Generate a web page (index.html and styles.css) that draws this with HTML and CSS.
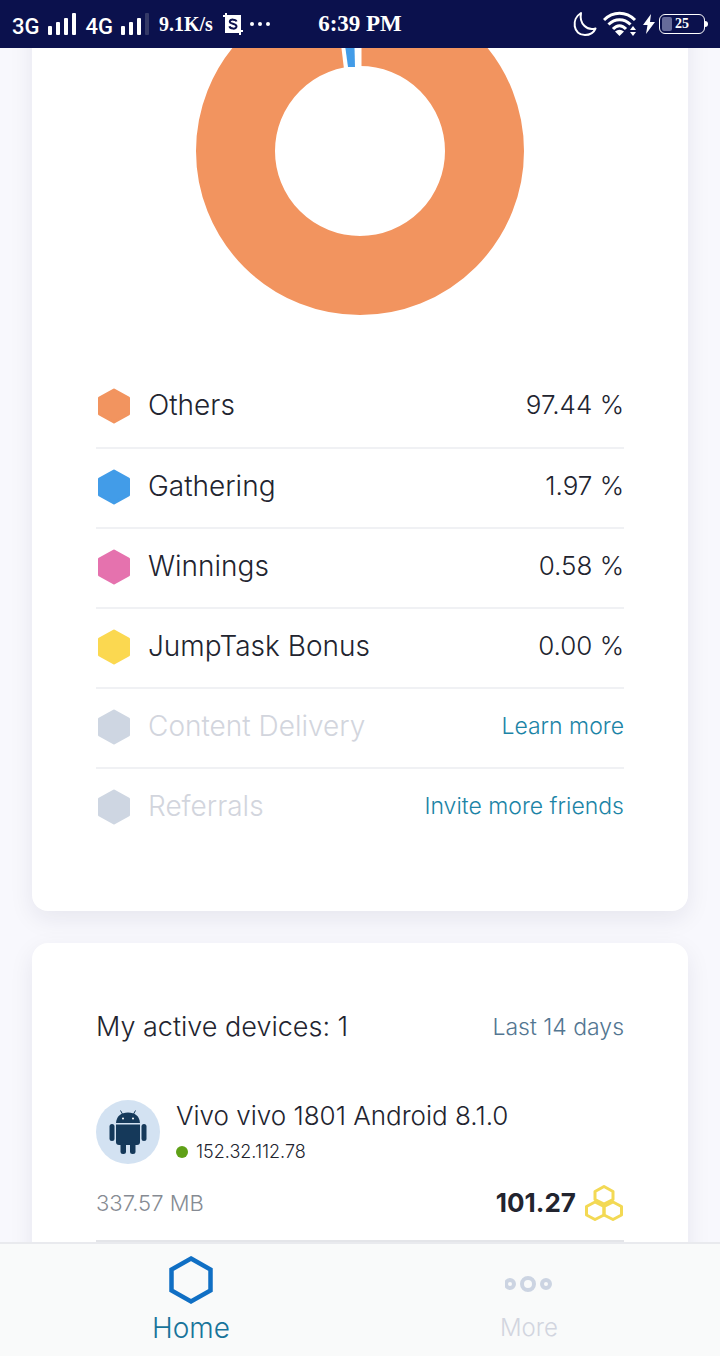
FILE: index.html
```html
<!DOCTYPE html>
<html lang="en">
<head>
    <meta charset="UTF-8">
    <meta name="viewport" content="width=device-width, initial-scale=1.0">
    <title>Dashboard</title>
    <link rel="stylesheet" href="styles.css">
</head>
<body>
    <header class="status-bar">
        <div class="status-left">
            <span class="network">3G</span>
            <svg class="signal" width="28" height="24" viewBox="0 0 28 24" fill="#fff">
                <rect x="0" y="14" width="4" height="9" rx="1"/>
                <rect x="8" y="10" width="4" height="13" rx="1"/>
                <rect x="16" y="6" width="4" height="17" rx="1"/>
                <rect x="24" y="1" width="4" height="22" rx="1"/>
            </svg>
            <span class="network">4G</span>
            <svg class="signal" width="28" height="24" viewBox="0 0 28 24" fill="#fff">
                <rect x="0" y="14" width="4" height="9" rx="1"/>
                <rect x="8" y="10" width="4" height="13" rx="1"/>
                <rect x="16" y="6" width="4" height="17" rx="1"/>
                <rect x="24" y="1" width="4" height="22" rx="1" fill="#343967"/>
            </svg>
            <span class="speed">9.1K/s</span>
            <svg class="shot" width="20" height="22" viewBox="0 0 20 22">
                <path d="M0 3h17v15h3M3 0v19h14v3" fill="none" stroke="#fff" stroke-width="2"/>
                <rect x="2" y="3" width="16" height="16" fill="#fff"/>
                <path d="M13.500 8.500C13 6.500 7 5.500 6.800 8.600C6.700 11.500 13.500 10 13.500 13.500C13.300 16.700 7 16 6.500 13.300" fill="none" stroke="#0b114d" stroke-width="2"/>
            </svg>
            <svg width="22" height="6" viewBox="0 0 22 6" fill="#fff">
                <circle cx="3" cy="3" r="2"/>
                <circle cx="11" cy="3" r="2"/>
                <circle cx="19" cy="3" r="2"/>
            </svg>
        </div>
        <div class="clock">6:39 PM</div>
        <div class="status-right">
            <svg width="24" height="26" viewBox="0 0 24 26">
                <path d="M8 2C-2 8 0 24 12 24C17 24 21 21 22.500 17.500C14 20 6 13 8 2Z" fill="none" stroke="#fff" stroke-width="2" stroke-linejoin="round"/>
            </svg>
            <svg class="wifi" width="34" height="26" viewBox="0 0 34 26">
                <g fill="none" stroke="#fff" stroke-width="3">
                    <path d="M1 9C10 0 23 0 32 9"/>
                    <path d="M5.500 13.500C12 7 21 7 27.500 13.500"/>
                    <path d="M10 18C14 13.500 19 13.500 23 18"/>
                </g>
                <path d="M12 20.500Q16.500 17 21 20.500L16.500 25Z" fill="#fff"/>
                <path d="M27 19l3-4 3 4zM27 21l3 4 3-4z" fill="#fff"/>
            </svg>
            <svg class="bolt" width="12" height="20" viewBox="0 0 12 20">
                <path d="M8 0L0 11h4.500L3 20L12 8H7Z" fill="#fff"/>
            </svg>
            <div class="battery"><span class="battery-level"></span>25</div>
            <span class="battery-tip"></span>
        </div>
    </header>

    <main class="content">
        <section class="card earnings">
            <svg class="donut" width="328" height="328" viewBox="0 0 328 328">
                <circle cx="164" cy="164" r="124.500" fill="none" stroke="#f2945f" stroke-width="79"/>
                <path d="M138 0L148 82L165.500 82V0Z" fill="#fff"/>
                <path d="M141 0L152 80L159 80L157 0Z" fill="#429ce8"/>
            </svg>
            <ul class="sources">
                <li class="source">
                    <svg class="hex orange" viewBox="0 0 36 36"><path d="M18 2L32.500 10V26L18 34L3.500 26V10Z"/></svg>
                    <span class="label">Others</span>
                    <span class="value">97.44 %</span>
                </li>
                <li class="source">
                    <svg class="hex blue" viewBox="0 0 36 36"><path d="M18 2L32.500 10V26L18 34L3.500 26V10Z"/></svg>
                    <span class="label">Gathering</span>
                    <span class="value">1.97 %</span>
                </li>
                <li class="source">
                    <svg class="hex pink" viewBox="0 0 36 36"><path d="M18 2L32.500 10V26L18 34L3.500 26V10Z"/></svg>
                    <span class="label">Winnings</span>
                    <span class="value">0.58 %</span>
                </li>
                <li class="source">
                    <svg class="hex yellow" viewBox="0 0 36 36"><path d="M18 2L32.500 10V26L18 34L3.500 26V10Z"/></svg>
                    <span class="label">JumpTask Bonus</span>
                    <span class="value">0.00 %</span>
                </li>
                <li class="source disabled">
                    <svg class="hex" viewBox="0 0 36 36"><path d="M18 2L32.500 10V26L18 34L3.500 26V10Z"/></svg>
                    <span class="label">Content Delivery</span>
                    <a class="value" href="#">Learn more</a>
                </li>
                <li class="source disabled">
                    <svg class="hex" viewBox="0 0 36 36"><path d="M18 2L32.500 10V26L18 34L3.500 26V10Z"/></svg>
                    <span class="label">Referrals</span>
                    <a class="value" href="#">Invite more friends</a>
                </li>
            </ul>
        </section>

        <section class="card devices">
            <div class="devices-head">
                <h2>My active devices: 1</h2>
                <button class="period" type="button">Last 14 days</button>
            </div>
            <div class="device">
                <svg class="avatar" width="64" height="64" viewBox="0 0 64 64">
                    <circle cx="32" cy="32" r="32" fill="#d3e2f2"/>
                    <g fill="#15395a">
                        <path d="M20 23C20.500 16 25 12.500 32 12.500S43.500 16 44 23Z"/>
                        <path d="M20 24.500H44V42Q44 45 41 45H23Q20 45 20 42Z"/>
                        <rect x="13.500" y="24" width="5" height="17" rx="2.500"/>
                        <rect x="45.500" y="24" width="5" height="17" rx="2.500"/>
                        <rect x="24.500" y="42" width="5.500" height="12" rx="2.500"/>
                        <rect x="34" y="42" width="5.500" height="12" rx="2.500"/>
                    </g>
                    <path d="M24.500 10.500L27 15M39.500 10.500L37 15" stroke="#15395a" stroke-width="1"/>
                    <circle cx="27" cy="18.500" r="1" fill="#fff"/>
                    <circle cx="37" cy="18.500" r="1" fill="#fff"/>
                </svg>
                <div>
                    <div class="device-name">Vivo vivo 1801 Android 8.1.0</div>
                    <div class="device-ip"><span class="dot"></span>152.32.112.78</div>
                </div>
            </div>
            <div class="device-stats">
                <span class="traffic">337.57 MB</span>
                <span class="credits">101.27</span>
                <svg width="40" height="38" viewBox="0 0 40 38" fill="none" stroke="#f3d954" stroke-width="3" stroke-linejoin="round">
                    <path d="M20 2.500L29 7.500V15.500L20 20L11 15.500V7.500Z"/>
                    <path d="M11 18L20 22.500V31L11 35.500L2.500 31V22.500Z"/>
                    <path d="M29 18L37.500 22.500V31L29 35.500L20 31V22.500Z"/>
                </svg>
            </div>
        </section>
    </main>

    <nav class="tab-bar">
        <a class="tab active" href="#">
            <svg width="48" height="52" viewBox="0 0 48 52">
                <path d="M24 4.500L43.500 15.500V36.500L24 47.500L4.500 36.500V15.500Z" fill="none" stroke="#106fc4" stroke-width="4.500"/>
            </svg>
            <span>Home</span>
        </a>
        <a class="tab" href="#">
            <svg width="48" height="52" viewBox="0 0 48 52" fill="none" stroke="#ccd4e2" stroke-width="4">
                <circle cx="5" cy="30" r="4"/>
                <circle cx="23" cy="30" r="6"/>
                <circle cx="41" cy="30" r="4"/>
            </svg>
            <span>More</span>
        </a>
    </nav>
</body>
</html>
```
FILE: styles.css
```css
* {
    box-sizing: border-box;
}
body {
    margin: 0;
    height: 100vh;
    display: flex;
    flex-direction: column;
    font-family: Inter, sans-serif;
    font-weight: 300;
    font-size: 28px;
    line-height: 40px;
    color: #22242f;
    background-color: #f8f8fd;
}
svg {
    display: block;
    flex-shrink: 0;
}
a {
    text-decoration: none;
}

/* phone status bar */
.status-bar {
    height: 48px;
    flex-shrink: 0;
    display: grid;
    grid-template-columns: 1fr auto 1fr;
    align-items: center;
    padding: 0 12px;
    color: #fff;
    background-color: #0b114d;
}
.status-left,
.status-right {
    display: flex;
    align-items: center;
}
.status-right {
    justify-content: flex-end;
}
.network {
    font-family: Roboto, sans-serif;
    font-weight: 500;
    font-size: 22px;
    padding-top: 6px;
}
.signal {
    margin: 0 10px 0 8px;
}
.speed,
.clock {
    font-family: "Liberation Serif", serif;
    font-weight: 700;
    font-size: 23px;
}
.speed {
    font-size: 20px;
}
.shot {
    margin: 0 6px 0 10px;
}
.wifi {
    margin: 0 6px;
}
.bolt {
    margin-right: 4px;
}
.battery {
    position: relative;
    width: 46px;
    height: 20px;
    border: 1px solid #fff;
    border-radius: 6px;
    font-family: "Liberation Serif", serif;
    font-weight: 700;
    font-size: 14px;
    line-height: 18px;
    text-align: center;
}
.battery-level {
    position: absolute;
    left: 2px;
    top: 2px;
    bottom: 2px;
    width: 10px;
    border-radius: 2px;
    background-color: #666b9a;
}
.battery-tip {
    width: 3px;
    height: 6px;
    border-radius: 0 3px 3px 0;
    background-color: #fff;
}

/* scrolled content */
.content {
    flex: 1;
    min-height: 0;
    overflow: hidden;
    padding: 0 32px;
}
.card {
    padding: 64px;
    border-radius: 16px;
    background-color: #fff;
    box-shadow: 0 8px 24px rgba(30, 30, 60, 0.08);
}
.earnings {
    margin-top: -125px;
    margin-bottom: 32px;
}
.donut {
    margin: 0 auto 52px;
}
.sources {
    list-style: none;
    margin: 0;
    padding: 0;
}
.source {
    display: flex;
    align-items: center;
    height: 80px;
    padding-bottom: 2px;
}
.source + .source {
    border-top: 2px solid #f0f1f4;
}
.label,
.value {
    padding-bottom: 2px;
}
.value {
    margin-left: auto;
    font-size: 26px;
}
a.value {
    font-size: 23px;
    color: #1c84a6;
}
.hex {
    width: 36px;
    height: 36px;
    margin-right: 16px;
    fill: #ced6e2;
    stroke: #ced6e2;
    stroke-width: 3;
    stroke-linejoin: round;
}
.orange {
    fill: #f2945f;
    stroke: #f2945f;
}
.blue {
    fill: #429ce8;
    stroke: #429ce8;
}
.pink {
    fill: #e572ae;
    stroke: #e572ae;
}
.yellow {
    fill: #fbd850;
    stroke: #fbd850;
}
.disabled {
    color: #d2d5dd;
}

/* devices */
.devices-head {
    display: flex;
    align-items: center;
    justify-content: space-between;
    margin-bottom: 53px;
}
h2 {
    margin: 0;
    font-size: 27px;
    font-weight: 300;
}
.period {
    padding: 0;
    border: none;
    background: none;
    font: inherit;
    font-size: 23px;
    color: #537691;
}
.device {
    display: flex;
    gap: 16px;
}
.device-name {
    font-size: 26px;
    line-height: 32px;
}
.device-ip {
    display: flex;
    align-items: center;
    gap: 8px;
    font-size: 18px;
}
.dot {
    width: 12px;
    height: 12px;
    border-radius: 50%;
    background-color: #5fa017;
}
.device-stats {
    display: flex;
    align-items: center;
    height: 70px;
    padding-bottom: 6px;
    border-bottom: 2px solid #e4e5e9;
}
.traffic {
    font-size: 22px;
    color: #868b93;
}
.credits {
    margin-left: auto;
    margin-right: 8px;
    font-size: 26px;
    font-weight: 700;
}

/* bottom tabs */
.tab-bar {
    display: flex;
    flex-shrink: 0;
    height: 114px;
    padding: 10px 22px 0;
    border-top: 2px solid #e9eaee;
    background-color: #f9fafa;
}
.tab {
    flex: 1;
    display: flex;
    flex-direction: column;
    align-items: center;
    gap: 2px;
    font-size: 24px;
    color: #d2d5df;
}
.tab.active {
    font-size: 28px;
    color: #18749a;
}
```
